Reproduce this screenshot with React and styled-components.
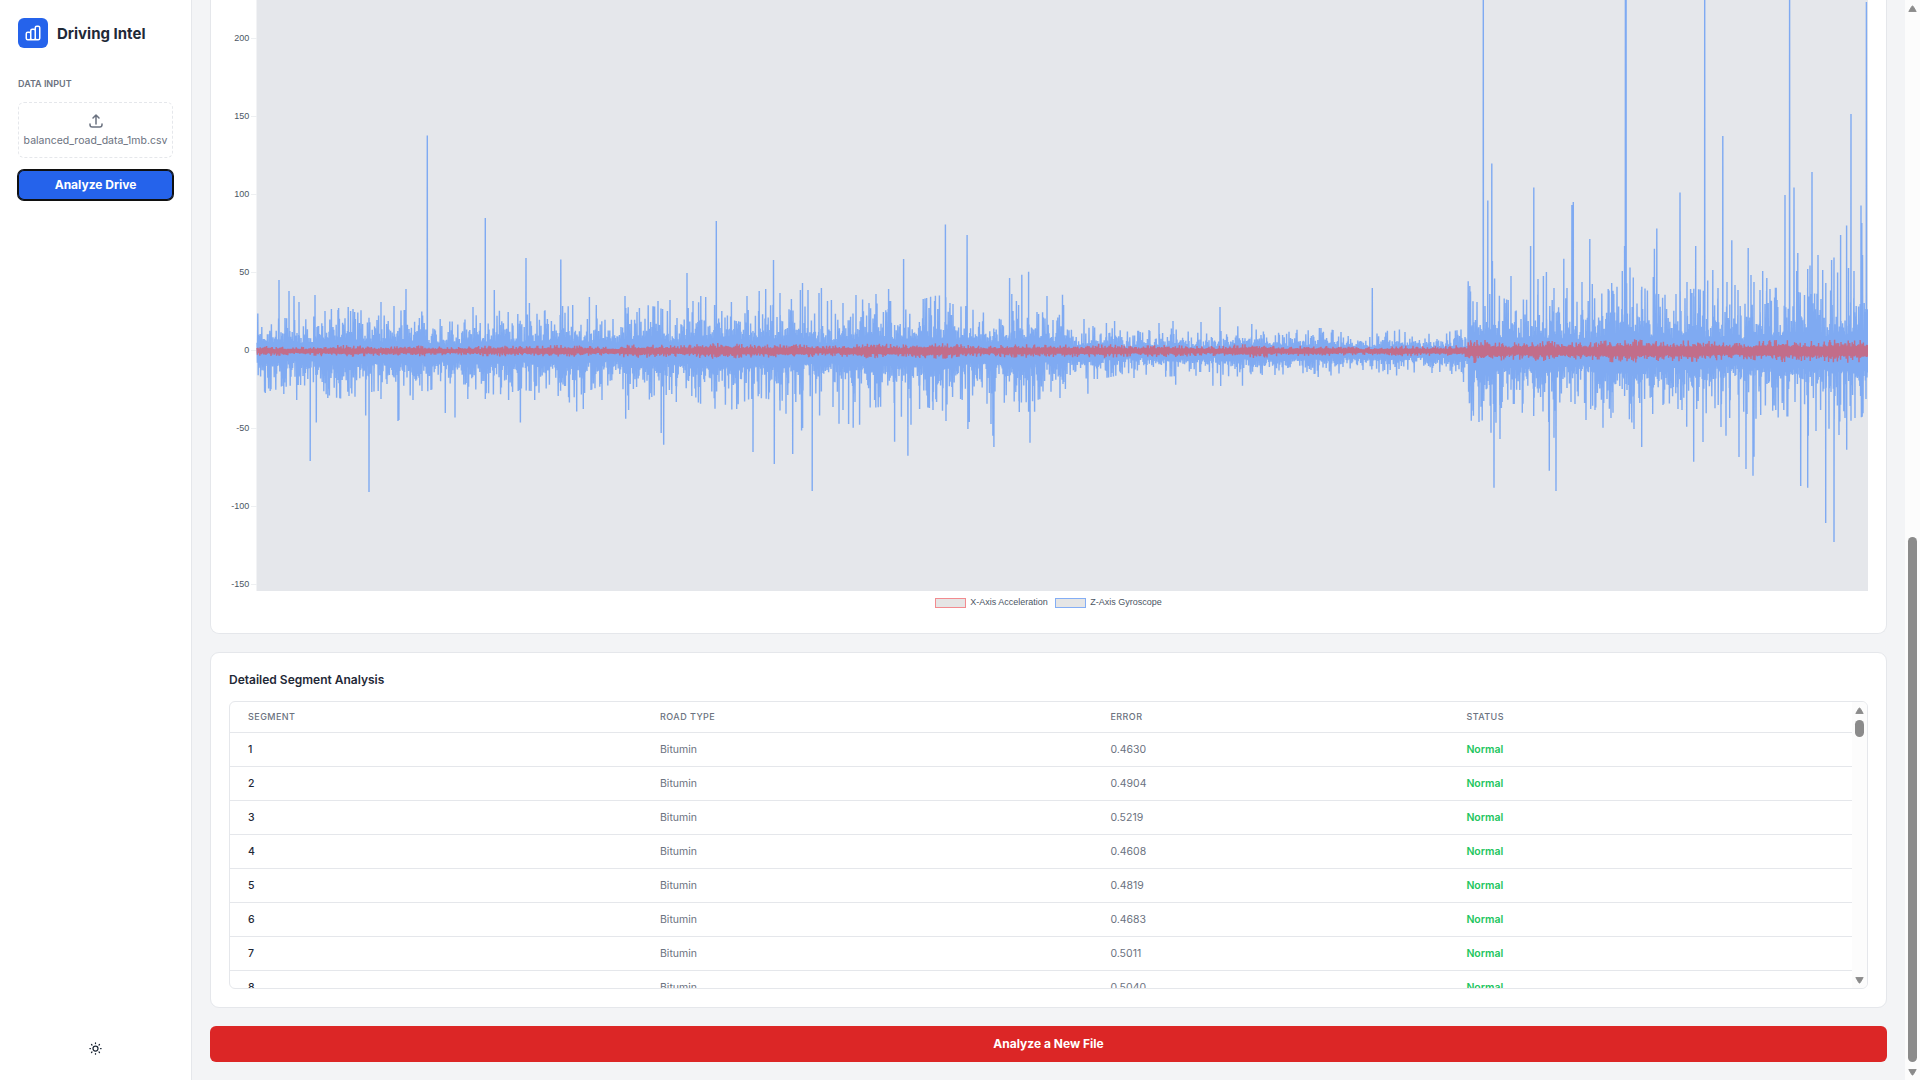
import React from "react";
import styled, { createGlobalStyle } from "styled-components";
import { HiOutlineChartBar, HiOutlineUpload, HiOutlineSun } from "react-icons/hi";

const GlobalStyle = createGlobalStyle`
  *, *::before, *::after { box-sizing: border-box; }
  body {
    margin: 0;
    overflow: hidden;
    background: #f3f4f6;
    color: #1f2937;
    font-family: Inter, "Liberation Sans", sans-serif;
  }
  button { font-family: inherit; border: 0; }
`;

const Page = styled.div`
  display: flex;
  width: 1920px;
  height: 1080px;
  overflow: hidden;
`;

const Sidebar = styled.aside`
  display: flex;
  flex-direction: column;
  flex: 0 0 192px;
  padding: 18px;
  background: #fff;
  border-right: 1px solid #e5e7eb;
`;

const Brand = styled.div`
  display: flex;
  align-items: center;
  gap: 9px;
  margin-bottom: 30px;
`;

const BrandMark = styled.div`
  display: grid;
  place-items: center;
  width: 30px;
  height: 30px;
  border-radius: 6px;
  background: #2563eb;
  color: #fff;
`;

const BrandName = styled.h1`
  margin: 0;
  font-size: 15px;
  line-height: 21px;
  font-weight: 700;
  white-space: nowrap;
`;

const SectionLabel = styled.h2`
  margin: 0 0 12px;
  font-size: 9px;
  line-height: 12px;
  font-weight: 600;
  color: #6b7280;
  text-transform: uppercase;
`;

const DropZone = styled.label`
  display: flex;
  flex-direction: column;
  align-items: center;
  gap: 3px;
  height: 56px;
  padding: 9px 0;
  border: 1px dashed #e5e7eb;
  border-radius: 6px;
  color: #6b7280;
`;

const FileName = styled.span`
  font-size: 10.5px;
  line-height: 15px;
  white-space: nowrap;
`;

const AnalyzeButton = styled.button`
  height: 30px;
  margin-top: 12px;
  border-radius: 6px;
  background: #2563eb;
  color: #fff;
  font-size: 12px;
  line-height: 18px;
  font-weight: 700;
  box-shadow: 0 0 0 1px #101010, inset 0 0 0 1px #101010;
`;

const ThemeToggle = styled.div`
  display: flex;
  justify-content: center;
  margin-top: auto;
  padding-bottom: 6px;
`;

const Main = styled.main`
  display: flex;
  flex-direction: column;
  gap: 18px;
  flex: 1;
  min-width: 0;
  padding: 0 18px 18px;
`;

const Card = styled.section`
  display: flex;
  flex-direction: column;
  height: ${(p) => p.$height}px;
  padding: ${(p) => (p.$flush ? "0 18px" : "18px")};
  background: #fff;
  border: 1px solid #e5e7eb;
  border-top-width: ${(p) => (p.$flush ? 0 : 1)}px;
  border-radius: ${(p) => (p.$flush ? "0 0 9px 9px" : "9px")};
`;

const ChartSvg = styled.svg`
  display: block;
  flex: none;

  text {
    font: 9px "Liberation Sans", Arial, sans-serif;
    fill: #4b5563;
    text-anchor: end;
  }
`;

const Legend = styled.div`
  display: flex;
  justify-content: center;
  gap: 7.5px;
  margin-top: 7px;
`;

const LegendItem = styled.div`
  display: flex;
  align-items: flex-start;
  gap: 4px;
  font: 9px/8px "Liberation Sans", Arial, sans-serif;
  color: #4b5563;

  &::before {
    content: "";
    width: 31px;
    height: 10px;
    border: 1px solid ${(p) => p.$stroke};
    background: #e5e5e5;
  }
`;

const CardTitle = styled.h3`
  margin: 0 0 12px;
  font-size: 12px;
  line-height: 18px;
  font-weight: 600;
`;

const TableFrame = styled.div`
  display: flex;
  height: 288px;
  overflow: hidden;
  border: 1px solid #e5e7eb;
  border-radius: 6px;
`;

const Table = styled.div`
  flex: 1;
  overflow: hidden;
`;

const Row = styled.div`
  display: grid;
  grid-template-columns: 412px 450.4px 356px 1fr;
  height: 34px;
  border-bottom: 1px solid #e5e7eb;
  font-size: 10.5px;
  line-height: 15px;
  color: #6b7280;
`;

const HeadRow = styled(Row)`
  height: 31px;
  font-size: 9px;
  line-height: 12px;
  font-weight: 500;
  letter-spacing: 0.45px;
  text-transform: uppercase;
`;

const Cell = styled.div`
  padding: 9px 18px;
`;

const IndexCell = styled(Cell)`
  font-weight: 500;
  color: #1f2937;
`;

const StatusCell = styled(Cell)`
  font-weight: 600;
  color: #22c55e;
`;

const ResetButton = styled.button`
  flex: 0 0 36px;
  border-radius: 6px;
  background: #dc2626;
  color: #fff;
  font-size: 12px;
  line-height: 18px;
  font-weight: 700;
`;

const Track = styled.div`
  display: flex;
  flex-direction: column;
  align-items: center;
  flex: 0 0 15px;
  padding: 5px 0 4px;
  background: #fcfcfc;
`;

const Thumb = styled.div`
  width: 9px;
  height: ${(p) => p.$length}px;
  margin: ${(p) => p.$offset}px 0 auto;
  border-radius: 5px;
  background: #8b8b8b;
`;

const Arrow = ({ down }) => (
  <svg width="9" height="7" viewBox="0 0 9 7">
    <path
      d={down ? "M.8.5h7.4l-2.9 5q-.8 1-1.6 0z" : "M.8 6.5h7.4l-2.9-5q-.8-1-1.6 0z"}
      fill="#8b8b8b"
      stroke="#8b8b8b"
      strokeWidth=".9"
      strokeLinejoin="round"
    />
  </svg>
);

const Scrollbar = ({ offset, length }) => (
  <Track>
    <Arrow />
    <Thumb $offset={offset} $length={length} />
    <Arrow down />
  </Track>
);

/* Signal geometry, in page pixels: 50 units = 78px, zero at y = 350. */
const LEFT = 257;
const RIGHT = 1868;
const BOTTOM = 591;

const PEAKS = [
  279,280,289,291,294,296,299,302,315,295,325,311,338,310,381,302,394,306,406,289,427.3,135.5,473,307,485.3,218,
  494.3,290,526,258,529.4,303,544.5,311,560.8,259.5,572.7,305,589.4,297,596.3,305,625,296,658,301,670,300,687,273,
  693,301,700.8,296,705.7,297,716.3,221,731.4,302,747,296,759.2,291,765.7,289,773.5,260,780,293,791.4,299,800.4,290,
  802.5,283,808,290,819,293,821.4,288,827.5,301,831.4,300,843,303,856,295,876,294,888.6,289,903.6,259,923.2,299,
  934.6,301,945.4,224.5,950,303,967.1,235,1009.6,278,1011.8,294,1016.4,301,1021.8,274.7,1028.6,271.7,1047,296,
  1062.5,294.7,1063.6,305,1084,319,1106.4,323,1114.6,321,1159,323,1173,321,1201,322,1220,307,1251.8,324,1372.3,288,
  1470.5,291.5,1473,303,1483.3,-9,1487.8,200.5,1491.8,163.4,1492.4,261,1494.6,278.6,1511,276,1530.6,246,1533.8,187.5,
  1538,279,1543.4,276,1546.4,272,1554,288,1563.8,258.7,1567,288,1571.9,205,1573.3,202,1582,282,1589.8,239,1592.3,284,
  1611.7,283,1624.6,246,1625.4,-9,1626.1,-9,1622.3,271,1630,267.5,1633.3,277.5,1641.5,290,1653.3,277,1654.4,248.8,
  1656.8,228.5,1676,294,1680,192.5,1687,282,1692,293,1695.7,246,1704.7,-9,1707.7,280.5,1712.8,270,1718,288,1722.8,136,
  1727,282,1731.8,240.3,1735,285,1738,290,1748.2,248,1751,275,1754,282,1760,290,1762.7,271,1766.8,278,1770,289,
  1777,300,1785,195,1789.6,-9,1794,187.5,1796.7,271,1797.8,253,1804.5,295,1807.7,269,1810,265.6,1812,172,1818,255,
  1822.7,270,1825.8,283,1831.6,260,1834,257.6,1837.6,272.5,1840.6,235,1846.6,225.4,1848.5,268,1851,114,1854,271,
  1861,205.5,1861.8,223,1862.5,255,1866.4,2,
];

const TROUGHS = [
  265.3,393,283.8,394,296.7,400,310.2,461,316.3,422.5,327.8,398,349,396,365.7,415.6,369,492,374,391.5,381,399,
  398,421,398.9,420,413,400,422,391,445.3,413,455,417.5,467.8,399,485.3,399,508.6,400,520.4,422.5,534.7,400,
  569.4,402.6,576.7,411.4,583.3,409,602,400,625.7,418.7,628.6,410,661.2,433,663.7,444.7,676.3,402,698.4,402.6,
  731.8,409.5,736.7,409,753,452,774.3,464,780,410.6,786,413.7,792.7,454,801.6,430.5,802.6,428,812.2,491,819.6,415.6,
  833,407,839,423.7,843,410,848.6,424,853.2,427.7,859.6,424.7,874.6,400,894.6,441.7,901.4,416.7,907.9,455.7,911,424.7,
  919.6,409,933,410,942.5,410.7,946,421,967.9,429,969.3,422,987,403.7,991,424,992.9,435.7,993.9,447,1004.3,402.7,
  1019.3,412,1028.6,411.7,1030,442.7,1034.6,411.7,1051,391.7,1060,398,1065.4,389,1075,372,1087.9,393.7,1134,378,
  1165.7,376.7,1175.7,384.7,1196,375.7,1212.9,385.7,1220.7,386,1242.5,385.7,1432,373,1463.5,382,1471.3,420.7,1481,406.7,
  1491,432.7,1494,487.7,1496,422.7,1500,439,1522.3,412.7,1533.7,416,1548.7,422,1549.3,470.7,1554,437.7,1556,491,
  1571,402,1575,404,1586,420,1590.7,409,1595,410,1603,427.7,1613,412.7,1634,429,1641.7,447,1652.7,414,1663,405,
  1678,409,1682,410,1686.7,426.7,1693.7,461.7,1696.7,409,1703,442,1721,427,1726,435.7,1729.7,418,1739,457,1743.7,411.7,
  1746,469,1747,414,1753,475.7,1754,456.7,1756,418.7,1760.7,415,1772.7,410.7,1787,409,1800.7,486,1807.7,487.7,
  1808.3,435.7,1816,431,1825.7,523,1829,428.7,1834,542,1839,435,1845,418,1846.7,449.7,1851,420.7,1855,418,
  1861.7,416.7,1866,399,
];

const randomFrom = (seed) => () => {
  seed = (seed + 0x6d2b79f5) | 0;
  let t = Math.imul(seed ^ (seed >>> 15), 1 | seed);
  t = (t + Math.imul(t ^ (t >>> 7), 61 | t)) ^ t;
  return ((t ^ (t >>> 14)) >>> 0) / 4294967296;
};

const pairs = (list) =>
  Array.from({ length: list.length / 2 }, (_, i) => [list[i * 2], list[i * 2 + 1]]);

const levelAt = (x, stops) => stops.find(([end]) => x < end)[1];

/* Each step alternates between a local minimum and a local maximum. */
const buildSignal = ({ seed, step, zero, scaleStops, floor, tail, cap, extra = [] }) => {
  const random = randomFrom(seed);
  const points = [];
  let side = -1;
  for (let x = LEFT; x < RIGHT; x += step) {
    const scale = levelAt(x, scaleStops);
    const swell = 0.95 + 0.2 * Math.sin(x / 17) * Math.sin(x / 41);
    const size = (floor + Math.min(-Math.log(1 - random()), cap) * tail) * scale * swell;
    points.push([x, zero + side * size]);
    side = -side;
  }
  extra.forEach(([x, y]) => points.push([x - 0.15, zero], [x, y], [x + 0.15, zero]));
  points.sort((a, b) => a[0] - b[0]);
  return "M" + points.map(([x, y]) => `${x.toFixed(2)} ${y.toFixed(1)}`).join("L");
};

const gyroscope = buildSignal({
  seed: 7,
  step: 0.4,
  zero: 352.5,
  floor: 0.75,
  tail: 0.85,
  cap: 2.7,
  scaleStops: [[450, 13.5], [620, 13.5], [840, 16.5], [1045, 17], [1068, 14], [1130, 7.6], [1270, 8.2], [1400, 7.6], [1468, 6.8], [1900, 20.5]],
  extra: [...pairs(PEAKS), ...pairs(TROUGHS)],
});

const acceleration = buildSignal({
  seed: 31,
  step: 0.4,
  zero: 351,
  floor: 0.9,
  tail: 0.5,
  cap: 3,
  scaleStops: [[620, 2.2], [1068, 2.9], [1270, 2.6], [1468, 2.2], [1900, 4.4]],
});

const TICKS = [200, 150, 100, 50, 0, -50, -100, -150];

const SignalChart = () => (
  <ChartSvg width="1639" height={BOTTOM} viewBox={`229 0 1639 ${BOTTOM}`}>
    <rect x={256.5} y="0" width={RIGHT - 256.5} height={BOTTOM} fill="#e5e7eb" />
    {TICKS.map((value) => {
      const y = 350 - value * 1.56;
      return (
        <g key={value}>
          <rect x="251" y={Math.round(y)} width="6" height="1" fill="#eef0f2" />
          <text x="249.2" y={y + 2.9}>{value}</text>
        </g>
      );
    })}
    <g fill="none" strokeWidth="1.4" strokeLinejoin="bevel">
      <path d={gyroscope} stroke="rgba(59,130,246,.6)" />
      <path d={acceleration} stroke="rgba(239,68,68,.6)" />
    </g>
  </ChartSvg>
);

const ERRORS = ["0.4630", "0.4904", "0.5219", "0.4608", "0.4819", "0.4683", "0.5011", "0.5040"];

export default function App() {
  return (
    <Page>
      <GlobalStyle />
      <Sidebar>
        <Brand>
          <BrandMark><HiOutlineChartBar size={18} /></BrandMark>
          <BrandName>Driving Intel</BrandName>
        </Brand>
        <SectionLabel>Data Input</SectionLabel>
        <DropZone>
          <HiOutlineUpload size={18} />
          <FileName>balanced_road_data_1mb.csv</FileName>
        </DropZone>
        <AnalyzeButton>Analyze Drive</AnalyzeButton>
        <ThemeToggle><HiOutlineSun size={15} /></ThemeToggle>
      </Sidebar>
      <Main>
        <Card $height={634} $flush>
          <SignalChart />
          <Legend>
            <LegendItem $stroke="#f28b8f">X-Axis Acceleration</LegendItem>
            <LegendItem $stroke="#84aef5">Z-Axis Gyroscope</LegendItem>
          </Legend>
        </Card>
        <Card $height={356}>
          <CardTitle>Detailed Segment Analysis</CardTitle>
          <TableFrame>
            <Table>
              <HeadRow>
                <Cell>Segment</Cell>
                <Cell>Road Type</Cell>
                <Cell>Error</Cell>
                <Cell>Status</Cell>
              </HeadRow>
              {ERRORS.map((error, i) => (
                <Row key={error}>
                  <IndexCell>{i + 1}</IndexCell>
                  <Cell>Bitumin</Cell>
                  <Cell>{error}</Cell>
                  <StatusCell>Normal</StatusCell>
                </Row>
              ))}
            </Table>
            <Scrollbar offset={6} length={17} />
          </TableFrame>
        </Card>
        <ResetButton>Analyze a New File</ResetButton>
      </Main>
      <Scrollbar offset={525} length={525} />
    </Page>
  );
}
